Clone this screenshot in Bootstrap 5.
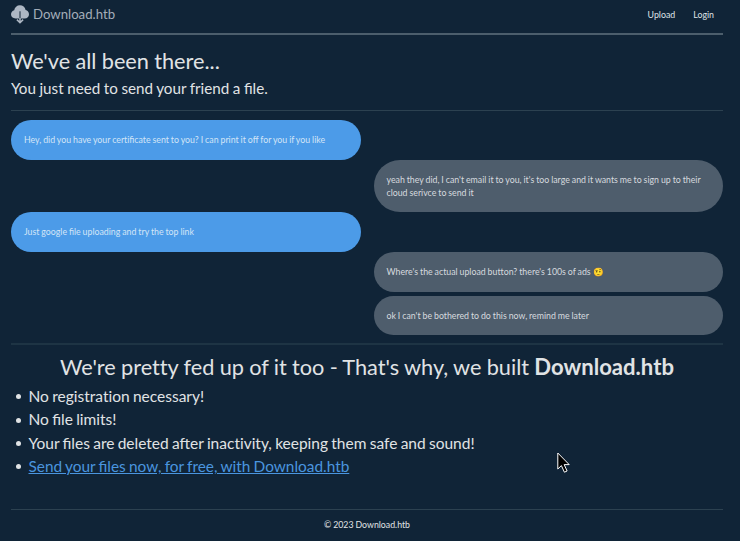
<!DOCTYPE html>
<html lang="en">
<head>
<meta charset="utf-8">
<meta name="viewport" content="width=device-width, initial-scale=1">
<title>Download.htb</title>
<link href="https://cdn.jsdelivr.net/npm/bootstrap@5.3.0/dist/css/bootstrap.min.css" rel="stylesheet">
<style>
body { background: #102437; color: #e0e3e5; font-family: Lato, "Noto Sans", sans-serif; font-size: 8.77px; word-spacing: -.3px; line-height: 13.2px; height: 541px; overflow: hidden; }
.page { padding: 0 17px 0 11px; }
.topbar { height: 33px; padding: 0 9px 4px 0; }
.brand { color: #a3adb9; font-size: 13.2px; gap: 4px; }
.brand svg { width: 18px; height: 19px; }
.menu { gap: 18px; }
.menu a { color: #dfe3e7; font-size: 8.8px; }
.rule { height: 1px; background: #2c4150; }
.rule-top { background: #4c5e6c; height: 2px; }
.rule-soft { background: #1e3444; height: 2px; }
.intro { height: 75px; padding-top: 13px; }
.title { font-size: 21.72px; line-height: 26px; font-weight: 400; }
.title b { font-size: 22.1px; }
.plain { font-variant-ligatures: none; }
.subtitle { font-size: 15.2px; line-height: 20px; margin-top: 4px; }
.chat { padding-top: 8.6px; height: 232px; }
.bubble { width: 349.5px; padding: 13px 12px 13px 13px; color: #d6dadf; }
.mine { background: #4c9be8; border-radius: 20px; min-height: 40px; color: #d3e5f7; }
.theirs { background: #4e5d6c; border-radius: 26px; min-height: 39px; }
.emoji { font-size: 8.6px; }
.pitch { padding-top: 9px; height: 164px; }
.perks { font-size: 15.5px; word-spacing: -.7px; line-height: 23.35px; padding-left: 4.5px; margin-top: 5px; }
.perks li::before { content: ""; width: 5px; height: 5px; border-radius: 50%; background: #e0e3e5; margin-right: 8px; }
.perks a { color: #4a95df; font-size: 15.4px; }
.foot { padding-top: 8px; }
.pointer { position: absolute; left: 557px; top: 452px; width: 13px; height: 22px; }
</style>
<script src="https://cdn.jsdelivr.net/npm/bootstrap@5.3.0/dist/js/bootstrap.bundle.min.js"></script>
</head>
<body>
<div class="page">
  <nav class="topbar d-flex justify-content-between align-items-center">
    <a href="#" class="brand d-flex align-items-center text-decoration-none">
      <svg viewBox="0 0 18 19"><path fill="#adb7c4" d="M4.500 13.500C1.800 13.500 0 11.600 0 9.300c0-2 1.400-3.700 3.200-4.100C3.600 2.200 6 .2 8.900.2c2.900 0 5.200 2 5.700 4.700C16.600 5.300 18 7 18 9.200c0 2.400-1.700 4.300-4.400 4.300z"/><path fill="none" stroke="#102437" stroke-width="1" d="M9 6.300v7.500"/><path fill="none" stroke="#adb7c4" stroke-width="1.500" d="M9 13v4.500M5.900 14.600 9 17.700l3.100-3.100"/></svg>
      <span>Download.htb</span>
    </a>
    <div class="menu d-flex"><a href="#" class="text-decoration-none">Upload</a><a href="#" class="text-decoration-none">Login</a></div>
  </nav>
  <div class="rule rule-top"></div>
  <header class="intro">
    <h1 class="title mb-0">We've all been there...</h1>
    <p class="subtitle mb-0">You just need to send your friend a file.</p>
  </header>
  <div class="rule"></div>
  <section class="chat d-flex flex-column">
    <div class="bubble mine">Hey, did you have your cer<span class="plain">ti</span>ficate sent to you? I can print it off for you if you like</div>
    <div class="bubble theirs align-self-end">yeah they did, I can't email it to you, it's too large and it wants me to sign up to their cloud serivce to send it</div>
    <div class="bubble mine">Just google file uploading and try the top link</div>
    <div class="bubble theirs align-self-end">Where's the actual upload bu<span class="plain">tt</span>on? there's 100s of ads <span class="emoji">🤨</span></div>
    <div class="bubble theirs align-self-end mt-1">ok I can't be bothered to do this now, remind me later</div>
  </section>
  <div class="rule rule-soft"></div>
  <section class="pitch">
    <h2 class="title plain mb-0 text-center">We're pretty fed up of it too - That's why, we built <b>Download.htb</b></h2>
    <ul class="perks list-unstyled mb-0">
      <li class="d-flex align-items-center"><span>No registra<span class="plain">ti</span>on necessary!</span></li>
      <li class="d-flex align-items-center"><span>No file limits!</span></li>
      <li class="d-flex align-items-center"><span>Your files are deleted after inac<span class="plain">ti</span>vity, keeping them safe and sound!</span></li>
      <li class="d-flex align-items-center"><a href="#">Send your files now, for free, with Download.htb</a></li>
    </ul>
  </section>
  <div class="rule"></div>
  <footer class="foot text-center">© 2023 Download.htb</footer>
</div>
<svg class="pointer" viewBox="0 0 13 22"><path d="M.8 1v16l3.600-3.400 3 6.600 2.700-1.200-2.900-6.400h5z" fill="#000" stroke="#fff"/></svg>
</body>
</html>
